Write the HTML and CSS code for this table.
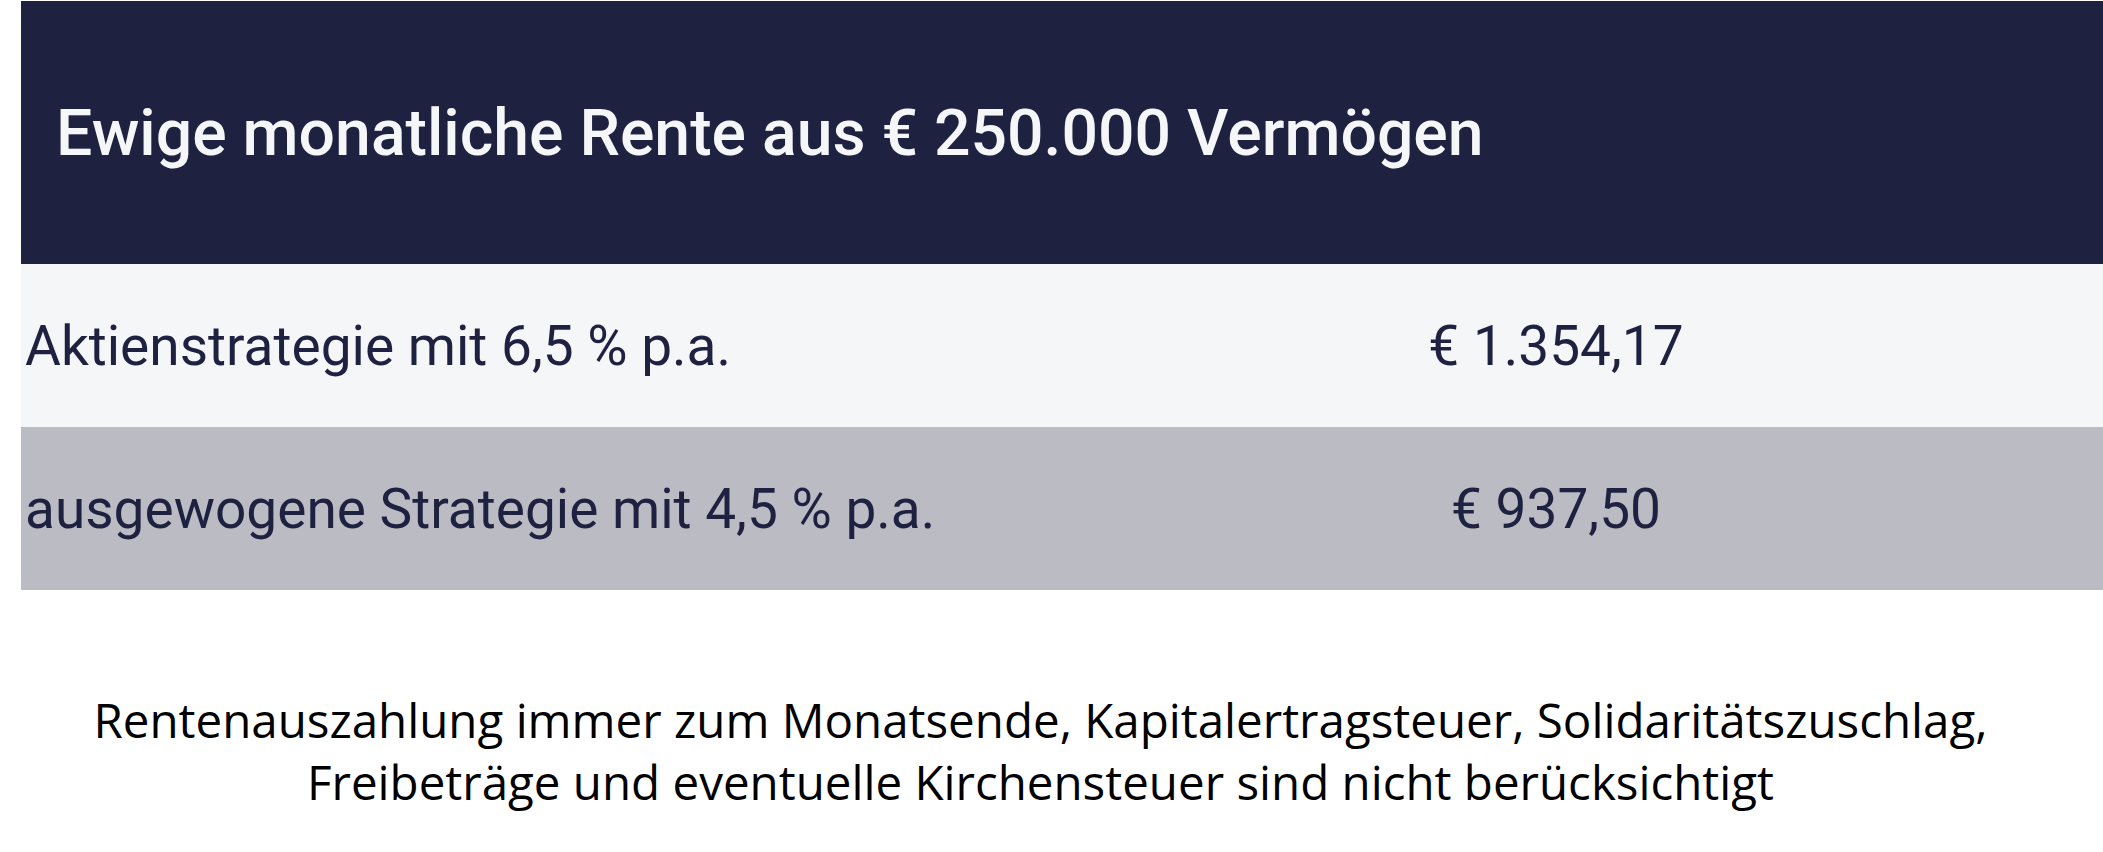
FILE: index.html
```html
<!DOCTYPE html>
<html lang="de">
<head>
    <meta charset="UTF-8">
    <meta name="viewport" content="width=device-width, initial-scale=1.0">
    <title>Ewige monatliche Rente</title>
    <link rel="stylesheet" href="styles.css">
</head>
<body>
    <div class="rent-table">
        <div class="rent-head">
            <h1>Ewige monatliche Rente aus € 250.000 Vermögen</h1>
        </div>
        <div class="rent-row light">
            <div class="label">Aktienstrategie mit 6,5 % p.a.</div>
            <div class="value">€ 1.354,17</div>
        </div>
        <div class="rent-row grey">
            <div class="label">ausgewogene Strategie mit 4,5 % p.a.</div>
            <div class="value">€ 937,50</div>
        </div>
    </div>
    <p class="note">Rentenauszahlung immer zum Monatsende, Kapitalertragsteuer, Solidaritätszuschlag,<br>Freibeträge und eventuelle Kirchensteuer sind nicht berücksichtigt</p>
</body>
</html>
```

FILE: styles.css
```css
body {
    margin: 0;
    background: #fff;
    font-family: Roboto, "Liberation Sans", sans-serif;
}
.rent-table {
    margin: 1px 0 0 21px;
}
.rent-head {
    background-color: #1f2140;
    height: 263px;
    display: flex;
    align-items: center;
    padding-left: 35px;
}
.rent-head h1 {
    margin: 0;
    color: #f5f6f8;
    font-size: 64.3px;
    font-weight: 500;
}
.rent-row {
    display: grid;
    grid-template-columns: 988px 1fr;
    align-items: center;
    height: 163px;
    color: #1f2140;
    font-size: 55px;
}
.rent-row.light {
    background-color: #f5f6f8;
}
.rent-row.grey {
    background-color: #bbbbc4;
}
.label {
    padding-left: 4px;
}
.value {
    text-align: center;
}
.note {
    margin: 99px 0 0;
    padding-right: 22px;
    text-align: center;
    font-family: "Open Sans", sans-serif;
    font-size: 47.5px;
    line-height: 62px;
    color: #000;
}
```
